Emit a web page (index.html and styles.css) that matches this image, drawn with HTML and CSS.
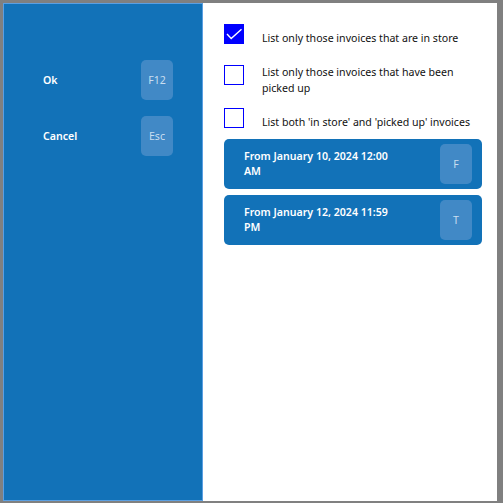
FILE: index.html
```html
<!DOCTYPE html>
<html>
<head>
<meta charset="utf-8">
<link rel="stylesheet" href="styles.css">
</head>
<body>
<div class="dialog">
  <div class="left">
    <div class="action">
      <span class="action-label">Ok</span>
      <span class="key">F12</span>
    </div>
    <div class="action">
      <span class="action-label">Cancel</span>
      <span class="key">Esc</span>
    </div>
  </div>
  <div class="right">
    <div class="checks">
      <div class="check-row">
        <span class="box checked">
          <svg width="20" height="20" viewBox="0 0 20 20"><polyline points="3,10 7.2,14.5 17.5,5.3" fill="none" stroke="#fff" stroke-width="1.4"/></svg>
        </span>
        <span class="check-text">List only those invoices that are in store</span>
      </div>
      <div class="check-row">
        <span class="box"></span>
        <span class="check-text">List only those invoices that have been picked up</span>
      </div>
      <div class="check-row">
        <span class="box"></span>
        <span class="check-text">List both 'in store' and 'picked up' invoices</span>
      </div>
    </div>
    <div class="dates">
      <div class="date-btn">
        <span class="date-text">From January 10, 2024 12:00 AM</span>
        <span class="key">F</span>
      </div>
      <div class="date-btn">
        <span class="date-text">From January 12, 2024 11:59 PM</span>
        <span class="key">T</span>
      </div>
    </div>
  </div>
</div>
</body>
</html>
```

FILE: styles.css
```css
html, body {
  margin: 0;
  padding: 0;
}
body {
  background: #808080;
  width: 503px;
  height: 503px;
  font-family: "Noto Sans", "Open Sans", sans-serif;
  font-size: 10.6px;
}
.dialog {
  margin: 3px 6px 0 3px;
  height: 498px;
  display: flex;
}
.left {
  width: 200px;
  box-sizing: border-box;
  background: #1272b8;
  border: 1px solid #5a9fe2;
  padding: 56px 29px 0 39px;
  display: flex;
  flex-direction: column;
  gap: 16px;
}
.action {
  display: flex;
  align-items: center;
  justify-content: space-between;
  height: 40px;
}
.action-label {
  color: #fff;
  font-weight: 600;
}
.key {
  width: 32px;
  height: 40px;
  border-radius: 5px;
  background: #4189c6;
  color: #c9def0;
  display: flex;
  align-items: center;
  justify-content: center;
  font-size: 10.6px;
}
.right {
  flex: 1;
  background: #fff;
  padding: 21px 15px 0 21px;
}
.checks {
  display: flex;
  flex-direction: column;
  gap: 12px;
}
.check-row {
  display: flex;
  align-items: center;
  min-height: 29px;
  gap: 18px;
}
.box {
  align-self: flex-start;
  width: 20px;
  height: 20px;
  box-sizing: border-box;
  border: 1px solid #0000ff;
  flex: none;
}
.box.checked {
  background: #0000ff;
  border: none;
}
.box svg {
  display: block;
}
.check-text {
  color: #111;
  line-height: 15.5px;
  width: 220px;
}
.dates {
  margin-top: 2px;
  display: flex;
  flex-direction: column;
  gap: 6px;
}
.date-btn {
  height: 50px;
  box-sizing: border-box;
  border-radius: 5px;
  background: #1272b8;
  display: flex;
  align-items: center;
  justify-content: space-between;
  padding: 0 10px 0 20px;
}
.date-text {
  color: #fff;
  font-weight: 600;
  width: 155px;
  line-height: 15px;
}
```
